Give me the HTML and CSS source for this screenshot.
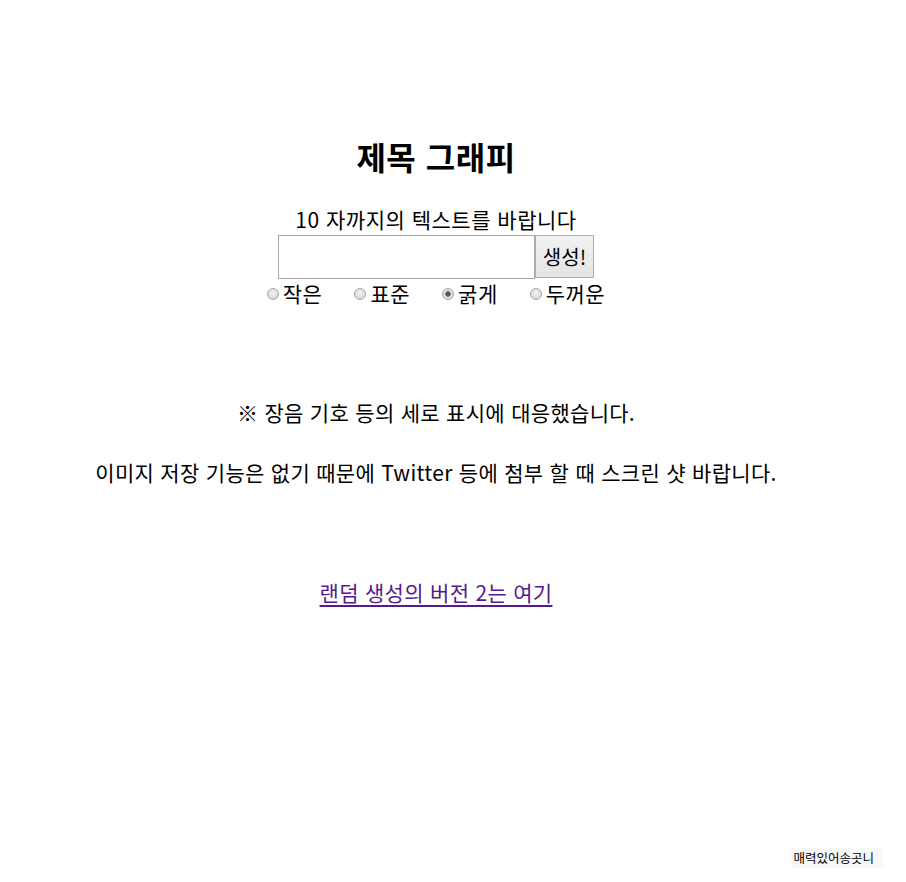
FILE: index.html
```html
<!DOCTYPE html>
<html lang="ko">
<head>
<meta charset="utf-8">
<link rel="stylesheet" href="styles.css">
</head>
<body>
<main class="page">
  <h1 class="title">제목 그래피</h1>
  <p class="hint">10 자까지의 텍스트를 바랍니다</p>
  <form class="form">
    <div class="row">
      <input class="text-input" type="text">
      <button class="btn" type="button">생성!</button>
    </div>
    <div class="radios">
      <label class="opt"><input type="radio" name="w" class="radio">작은</label>
      <label class="opt"><input type="radio" name="w" class="radio">표준</label>
      <label class="opt"><input type="radio" name="w" class="radio" checked>굵게</label>
      <label class="opt"><input type="radio" name="w" class="radio">두꺼운</label>
    </div>
  </form>
  <p class="note">※ 장음 기호 등의 세로 표시에 대응했습니다.</p>
  <p class="note note2">이미지 저장 기능은 없기 때문에 Twitter 등에 첨부 할 때 스크린 샷 바랍니다.</p>
  <p class="linkline"><a class="link" href="#">랜덤 생성의 버전 2는 여기</a></p>
</main>
<div class="badge">매력있어송곳니</div>
</body>
</html>
```
FILE: styles.css
```css
html, body {
  margin: 0;
  padding: 0;
  background: #fff;
}
body {
  font-family: "Noto Sans CJK KR", "Noto Sans", sans-serif;
  color: #000;
  width: 906px;
  height: 882px;
  position: relative;
  overflow: hidden;
}
.page {
  display: flex;
  flex-direction: column;
  align-items: center;
  width: 872px;
  padding-top: 134px;
}
.title {
  margin: 0;
  font-size: 32px;
  font-weight: 700;
  line-height: 44px;
  letter-spacing: 0.5px;
}
.hint {
  margin: 27px 0 0;
  font-size: 21px;
  line-height: 28px;
  letter-spacing: 0.5px;
}
.form {
  display: flex;
  flex-direction: column;
  align-items: center;
}
.row {
  display: flex;
  margin-top: 2px;
}
.text-input {
  box-sizing: border-box;
  width: 257px;
  height: 44px;
  border: 1px solid #a9a9a9;
  margin: 0;
  padding: 2px 4px;
  font-size: 20px;
}
.btn {
  box-sizing: border-box;
  width: 59px;
  height: 43px;
  margin: 0;
  padding: 0;
  border: 1px solid #adadad;
  background: linear-gradient(#f2f2f2, #e4e4e4);
  font-family: "Noto Sans CJK KR", sans-serif;
  font-size: 20px;
  color: #000;
}
.radios {
  display: flex;
  gap: 32px;
  margin-top: 0;
  line-height: 28px;
  font-size: 21px;
  letter-spacing: 0.5px;
}
.opt {
  display: flex;
  align-items: center;
}
.radio {
  appearance: none;
  -webkit-appearance: none;
  width: 12px;
  height: 12px;
  margin: 2px 4px 0 0;
  border-radius: 50%;
  border: 1px solid #a6a6a6;
  background: radial-gradient(circle at 50% 40%, #f0f0f0, #d2d2d2);
  box-sizing: border-box;
}
.radio:checked {
  background: radial-gradient(circle, #555 0 2.4px, #e2e2e2 3px, #d0d0d0);
}
.note {
  margin: 91px 0 0;
  font-size: 21px;
  line-height: 28px;
  letter-spacing: 0.3px;
}
.note2 {
  margin-top: 32px;
}
.linkline {
  margin: 92px 0 0;
  font-size: 21px;
  line-height: 28px;
  letter-spacing: 0.3px;
}
.link {
  color: #551a8b;
  text-decoration: underline;
  text-underline-offset: 4px;
}
.badge {
  position: absolute;
  right: 23px;
  bottom: 14px;
  background: #f8f8f8;
  font-size: 12.5px;
  line-height: 20px;
  padding: 0 9px 0 2px;
  color: #000;
}
```
